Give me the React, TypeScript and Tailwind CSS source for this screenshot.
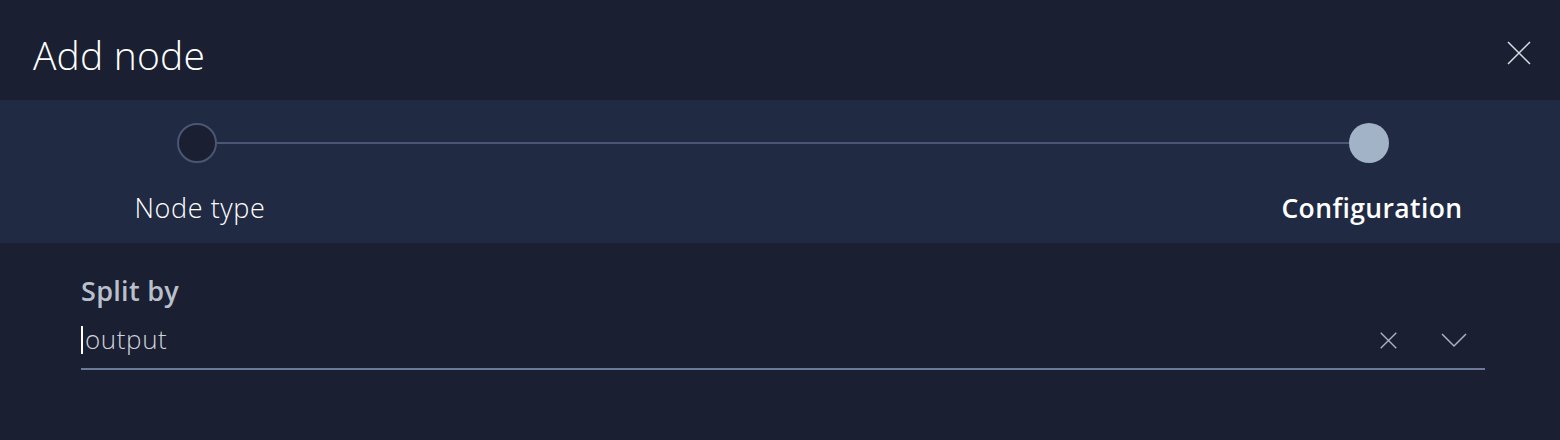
import React from 'react';

const XIcon = ({ size, className, sw = 1.5 }: { size: number; className?: string; sw?: number }) => (
  <svg width={size} height={size} viewBox="0 0 24 24" className={className} fill="none" stroke="currentColor" strokeWidth={sw}>
    <path d="M1 1 L23 23 M23 1 L1 23" />
  </svg>
);

export default function App() {
  return (
    <div className="w-[1560px] h-[440px] bg-[#1a1f31] text-white" style={{ fontFamily: '"Open Sans", "Noto Sans", sans-serif' }}>
      {/* Header */}
      <div className="h-[100px] flex items-center justify-between pl-[33px] pr-[29px] pt-[12px]">
        <h1 className="text-[39px] font-light leading-none tracking-[0.2px] pb-[4px]">Add node</h1>
        <button className="text-[#d8dce4] mb-[6px]">
          <XIcon size={24} />
        </button>
      </div>

      {/* Stepper */}
      <div className="h-[143px] bg-[#212a43] pt-[23px]">
        <div className="flex items-center pl-[177px] pr-[171px]">
          <div className="w-[40px] h-[40px] rounded-full border-2 border-[#4a5674] bg-[#1a1f31]" />
          <div className="flex-1 h-[2px] bg-[#4a5674]" />
          <div className="w-[40px] h-[40px] rounded-full bg-[#a3b3c7]" />
        </div>
        <div className="flex justify-between pl-[100px] pr-[88px] mt-[28px]">
          <div className="w-[200px] text-center text-[27px] leading-[34px] font-light tracking-[0.6px]">Node type</div>
          <div className="w-[200px] text-center text-[26.5px] leading-[34px] font-semibold tracking-[0.4px]">Configuration</div>
        </div>
      </div>

      {/* Form */}
      <div className="pl-[81px] pr-[75px] pt-[32px]">
        <label className="block text-[27px] leading-[32px] font-semibold text-[#b9c0cc] tracking-[0.3px]">Split by</label>
        <div className="flex items-center h-[58px] mt-[5px] border-b-2 border-[#6b7a98]">
          <div className="w-[2px] h-[28px] bg-white" />
          <span className="flex-1 pl-[2px] text-[26px] leading-none font-light text-[#cdd2dc] tracking-[0.6px] pb-[2px]">output</span>
          <span className="text-[#aab2c0] mr-[44px]">
            <XIcon size={17} sw={2} />
          </span>
          <svg width="26" height="16" viewBox="0 0 26 16" fill="none" stroke="#aab2c0" strokeWidth={1.5} className="mr-[18px]">
            <path d="M1 2 L13 14 L25 2" />
          </svg>
        </div>
      </div>
    </div>
  );
}
